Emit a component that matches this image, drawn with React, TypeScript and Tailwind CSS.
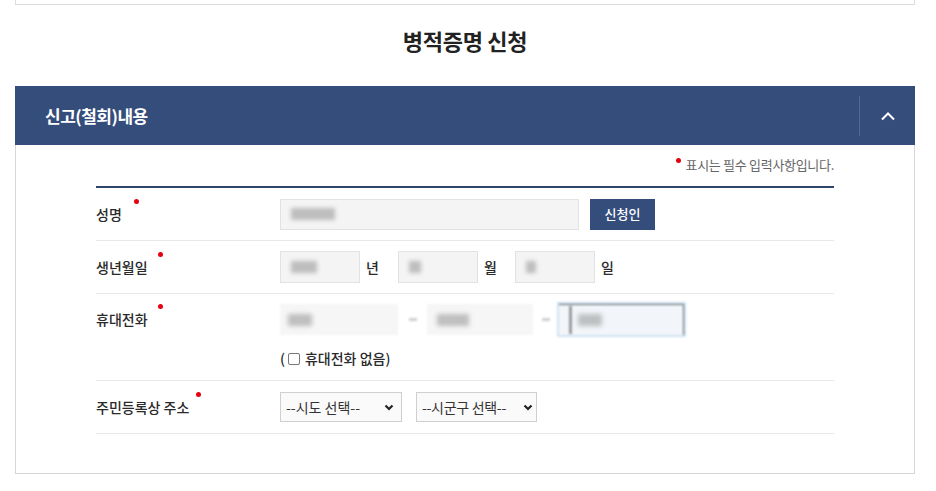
import React from 'react';

const Req = ({ ml = 'ml-[9px]' }: { ml?: string }) => (
  <span className={`inline-block w-[5px] h-[5px] rounded-full bg-[#e60012] -translate-y-[13px] ${ml}`} />
);

const Blur = ({ w, className = '' }: { w: string; className?: string }) => (
  <span className={`inline-block h-[12px] ${w} bg-[#9a9a9a]/60 blur-[2px] ${className}`} />
);

const Chevron = () => (
  <svg width="10" height="7" viewBox="0 0 10 7" className="shrink-0">
    <polyline points="1.5,1.5 5,5 8.5,1.5" fill="none" stroke="#222" strokeWidth="2.2" />
  </svg>
);

const Row = ({ label, children, ml, top = false, h = 'h-[53px]' }: { label: string; children: React.ReactNode; ml?: string; top?: boolean; h?: string }) => (
  <div className={`flex border-b border-[#e8e8e8] ${h} ${top ? 'items-start pt-[10px]' : 'items-center'}`}>
    <div className={`w-[184px] shrink-0 text-[14px] font-medium text-[#2a2a2a] flex items-center ${top ? 'h-[31px]' : ''}`}>
      <span>{label}</span>
      <Req ml={ml} />
    </div>
    <div className="flex-1">{children}</div>
  </div>
);

export default function App() {
  return (
    <div className="w-[936px] h-[491px] bg-white font-['Noto_Sans_CJK_KR','Noto_Sans',sans-serif] text-[#333] overflow-hidden">
      <div className="w-[900px] ml-[15px]">
        {/* previous box edge */}
        <div className="h-[5px] border-x border-b border-[#dcdcdc]" />

        <h2 className="h-[81px] flex items-center justify-center pb-[10px] text-[22px] font-bold text-[#222] tracking-[-0.3px]">
          병적증명 신청
        </h2>

        {/* panel header */}
        <div className="h-[59px] bg-[#354d7b] flex items-center justify-between">
          <span className="pl-[30px] text-[17px] font-bold text-white tracking-[-0.5px]">신고(철회)내용</span>
          <div className="w-[56px] h-[40px] border-l border-white/15 flex items-center justify-center">
            <svg width="16" height="10" viewBox="0 0 16 10">
              <polyline points="2,8.5 8,2.5 14,8.5" fill="none" stroke="#fff" strokeWidth="2" />
            </svg>
          </div>
        </div>

        {/* panel body */}
        <div className="border-x border-b border-[#d6d6d6] px-[80px] pt-[11px] pb-[39px]">
          <p className="text-right text-[13px] text-[#666] leading-[18px] mb-[12px] tracking-[-0.3px]">
            <span className="inline-block w-[5px] h-[5px] rounded-full bg-[#e60012] -translate-y-[7px] mr-[5px]" />
            표시는 필수 입력사항입니다.
          </p>

          <div className="border-t-2 border-[#2e4468]">
            <Row label="성명" ml="ml-[12px]">
              <div className="flex items-center gap-[11px]">
                <div className="w-[299px] h-[31px] bg-[#f4f4f4] border border-[#e2e2e2] flex items-center pl-[10px]">
                  <Blur w="w-[44px]" />
                </div>
                <button className="w-[65px] h-[31px] bg-[#354d7b] text-white text-[13px] font-medium">신청인</button>
              </div>
            </Row>

            <Row label="생년월일" ml="ml-[10px]">
              <div className="flex items-center text-[14px] font-medium text-[#2a2a2a]">
                <div className="w-[80px] h-[32px] bg-[#f4f4f4] border border-[#e2e2e2] flex items-center pl-[10px]">
                  <Blur w="w-[26px]" />
                </div>
                <span className="ml-[6px] w-[32px]">년</span>
                <div className="w-[80px] h-[32px] bg-[#f4f4f4] border border-[#e2e2e2] flex items-center pl-[10px]">
                  <Blur w="w-[12px]" />
                </div>
                <span className="ml-[6px] w-[31px]">월</span>
                <div className="w-[80px] h-[32px] bg-[#f4f4f4] border border-[#e2e2e2] flex items-center pl-[10px]">
                  <Blur w="w-[10px]" />
                </div>
                <span className="ml-[6px]">일</span>
              </div>
            </Row>

            <Row label="휴대전화" ml="ml-[10px]" top h="h-[87px]">
              <div className="flex items-center h-[31px]">
                <div className="w-[118px] h-[31px] bg-[#f6f6f6] flex items-center pl-[8px] blur-[1px]">
                  <Blur w="w-[24px]" />
                </div>
                <span className="w-[29px] flex justify-center">
                  <span className="w-[8px] h-[3px] bg-[#cfcfcf] blur-[1px]" />
                </span>
                <div className="w-[106px] h-[31px] bg-[#f6f6f6] flex items-center pl-[10px] blur-[1px]">
                  <Blur w="w-[32px]" />
                </div>
                <span className="w-[26px] flex justify-center">
                  <span className="w-[8px] h-[3px] bg-[#cfcfcf] blur-[1px]" />
                </span>
                <div className="w-[125px] h-[31px] bg-[#f2f6fa] border-t border-r border-[#222]/70 flex items-center pl-[10px] blur-[1px] shadow-[0_0_0_2px_rgba(160,200,230,0.5)]">
                  <span className="w-[3px] h-[28px] bg-[#999] mr-[6px]" />
                  <Blur w="w-[24px]" />
                </div>
              </div>
              <div className="mt-[13px] flex items-center text-[14px] font-medium text-[#2a2a2a]">
                <span>(</span>
                <span className="inline-block w-[12px] h-[12px] border border-[#767676] rounded-[2px] ml-[3px] mr-[5px] bg-white" />
                <span>휴대전화 없음)</span>
              </div>
            </Row>

            <Row label="주민등록상 주소" ml="ml-[7px]">
              <div className="flex items-center gap-[14px]">
                <div className="w-[122px] h-[30px] border border-[#cfcfcf] bg-[#fafafa] flex items-center justify-between pl-[5px] pr-[7px] text-[14px] text-[#333]">
                  <span>--시도 선택--</span>
                  <Chevron />
                </div>
                <div className="w-[121px] h-[30px] border border-[#cfcfcf] bg-[#fafafa] flex items-center justify-between pl-[5px] pr-[3px] text-[14px] text-[#333] tracking-[-0.3px]">
                  <span>--시군구 선택--</span>
                  <Chevron />
                </div>
              </div>
            </Row>
          </div>
        </div>
      </div>
    </div>
  );
}
